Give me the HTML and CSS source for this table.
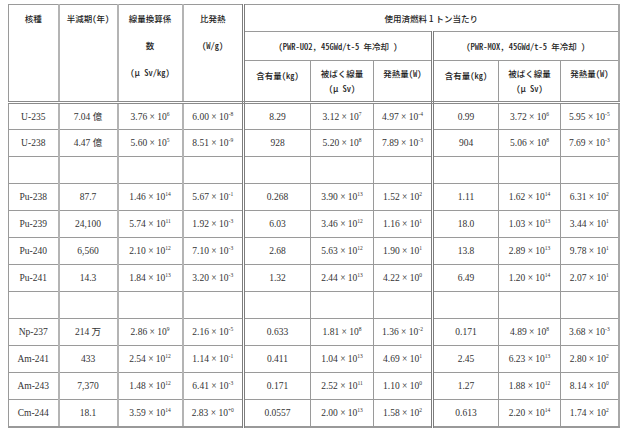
FILE: index.html
```html
<!DOCTYPE html>
<html lang="ja">
<head>
<meta charset="utf-8">
<link rel="stylesheet" href="styles.css">
</head>
<body>
<div class="wrap">
<table class="nuc">
  <colgroup>
    <col class="c1"><col class="c2"><col class="c3"><col class="c4">
    <col class="c5"><col class="c6"><col class="c7">
    <col class="c8"><col class="c9"><col class="c10">
  </colgroup>
  <thead>
    <tr class="h1">
      <th rowspan="3" class="tall lt">核種</th>
      <th rowspan="3" class="tall lt">半減期(年)</th>
      <th rowspan="3" class="tall lt">線量換算係<br>数<br>(μ Sv/kg)</th>
      <th rowspan="3" class="tall lt dbl">比発熱<br>(W/g)</th>
      <th colspan="6" class="mid rb fw">使用済燃料 1 トン当たり</th>
    </tr>
    <tr class="h2">
      <th colspan="3" class="mid dbl">(PWR-UO2, 45GWd/t-5 年冷却 )</th>
      <th colspan="3" class="mid rb">(PWR-MOX, 45GWd/t-5 年冷却 )</th>
    </tr>
    <tr class="h3">
      <th class="sub amt">含有量(kg)</th>
      <th class="sub">被ばく線量<br>(μ Sv)</th>
      <th class="sub dbl">発熱量(W)</th>
      <th class="sub amt">含有量(kg)</th>
      <th class="sub">被ばく線量<br>(μ Sv)</th>
      <th class="sub rb">発熱量(W)</th>
    </tr>
  </thead>
  <tbody>
    <tr class="first">
      <td class="lt">U-235</td><td class="lt">7.04 億</td><td class="lt">3.76 × 10<sup>6</sup></td><td class="lt dbl">6.00 × 10<sup>-8</sup></td>
      <td>8.29</td><td>3.12 × 10<sup>7</sup></td><td class="dbl">4.97 × 10<sup>-4</sup></td>
      <td>0.99</td><td>3.72 × 10<sup>6</sup></td><td class="rb">5.95 × 10<sup>-5</sup></td>
    </tr>
    <tr>
      <td class="lt">U-238</td><td class="lt">4.47 億</td><td class="lt">5.60 × 10<sup>5</sup></td><td class="lt dbl">8.51 × 10<sup>-9</sup></td>
      <td>928</td><td>5.20 × 10<sup>8</sup></td><td class="dbl">7.89 × 10<sup>-3</sup></td>
      <td>904</td><td>5.06 × 10<sup>8</sup></td><td class="rb">7.69 × 10<sup>-3</sup></td>
    </tr>
    <tr>
      <td class="lt"></td><td class="lt"></td><td class="lt"></td><td class="lt dbl"></td>
      <td></td><td></td><td class="dbl"></td>
      <td></td><td></td><td class="rb"></td>
    </tr>
    <tr>
      <td class="lt">Pu-238</td><td class="lt">87.7</td><td class="lt">1.46 × 10<sup>14</sup></td><td class="lt dbl">5.67 × 10<sup>-1</sup></td>
      <td>0.268</td><td>3.90 × 10<sup>13</sup></td><td class="dbl">1.52 × 10<sup>2</sup></td>
      <td>1.11</td><td>1.62 × 10<sup>14</sup></td><td class="rb">6.31 × 10<sup>2</sup></td>
    </tr>
    <tr>
      <td class="lt">Pu-239</td><td class="lt">24,100</td><td class="lt">5.74 × 10<sup>11</sup></td><td class="lt dbl">1.92 × 10<sup>-3</sup></td>
      <td>6.03</td><td>3.46 × 10<sup>12</sup></td><td class="dbl">1.16 × 10<sup>1</sup></td>
      <td>18.0</td><td>1.03 × 10<sup>13</sup></td><td class="rb">3.44 × 10<sup>1</sup></td>
    </tr>
    <tr>
      <td class="lt">Pu-240</td><td class="lt">6,560</td><td class="lt">2.10 × 10<sup>12</sup></td><td class="lt dbl">7.10 × 10<sup>-3</sup></td>
      <td>2.68</td><td>5.63 × 10<sup>12</sup></td><td class="dbl">1.90 × 10<sup>1</sup></td>
      <td>13.8</td><td>2.89 × 10<sup>13</sup></td><td class="rb">9.78 × 10<sup>1</sup></td>
    </tr>
    <tr>
      <td class="lt">Pu-241</td><td class="lt">14.3</td><td class="lt">1.84 × 10<sup>13</sup></td><td class="lt dbl">3.20 × 10<sup>-3</sup></td>
      <td>1.32</td><td>2.44 × 10<sup>13</sup></td><td class="dbl">4.22 × 10<sup>0</sup></td>
      <td>6.49</td><td>1.20 × 10<sup>14</sup></td><td class="rb">2.07 × 10<sup>1</sup></td>
    </tr>
    <tr>
      <td class="lt"></td><td class="lt"></td><td class="lt"></td><td class="lt dbl"></td>
      <td></td><td></td><td class="dbl"></td>
      <td></td><td></td><td class="rb"></td>
    </tr>
    <tr>
      <td class="lt">Np-237</td><td class="lt">214 万</td><td class="lt">2.86 × 10<sup>9</sup></td><td class="lt dbl">2.16 × 10<sup>-5</sup></td>
      <td>0.633</td><td>1.81 × 10<sup>8</sup></td><td class="dbl">1.36 × 10<sup>-2</sup></td>
      <td>0.171</td><td>4.89 × 10<sup>8</sup></td><td class="rb">3.68 × 10<sup>-3</sup></td>
    </tr>
    <tr>
      <td class="lt">Am-241</td><td class="lt">433</td><td class="lt">2.54 × 10<sup>12</sup></td><td class="lt dbl">1.14 × 10<sup>-1</sup></td>
      <td>0.411</td><td>1.04 × 10<sup>13</sup></td><td class="dbl">4.69 × 10<sup>1</sup></td>
      <td>2.45</td><td>6.23 × 10<sup>13</sup></td><td class="rb">2.80 × 10<sup>2</sup></td>
    </tr>
    <tr>
      <td class="lt">Am-243</td><td class="lt">7,370</td><td class="lt">1.48 × 10<sup>12</sup></td><td class="lt dbl">6.41 × 10<sup>-3</sup></td>
      <td>0.171</td><td>2.52 × 10<sup>11</sup></td><td class="dbl">1.10 × 10<sup>0</sup></td>
      <td>1.27</td><td>1.88 × 10<sup>12</sup></td><td class="rb">8.14 × 10<sup>0</sup></td>
    </tr>
    <tr class="last">
      <td class="lt">Cm-244</td><td class="lt">18.1</td><td class="lt">3.59 × 10<sup>14</sup></td><td class="lt dbl">2.83 × 10<sup>+0</sup></td>
      <td>0.0557</td><td>2.00 × 10<sup>13</sup></td><td class="dbl">1.58 × 10<sup>2</sup></td>
      <td>0.613</td><td>2.20 × 10<sup>14</sup></td><td class="rb">1.74 × 10<sup>2</sup></td>
    </tr>
  </tbody>
</table>
</div>
</body>
</html>
```
FILE: styles.css
```css
html, body {
  margin: 0;
  padding: 0;
  background: #ffffff;
}

.wrap {
  padding: 4px 0 0 8px;
}

.nuc {
  border-collapse: collapse;
  table-layout: fixed;
  width: 611px;
  color: #333333;
}

.c1 { width: 50px; }
.c2 { width: 59px; }
.c3 { width: 65px; }
.c4 { width: 61px; }
.c5 { width: 67px; }
.c6 { width: 63px; }
.c7 { width: 59px; }
.c8 { width: 66px; }
.c9 { width: 62px; }
.c10 { width: 58px; }

.nuc th,
.nuc td {
  border: 1px solid #9a9a9a;
  padding: 0;
  text-align: center;
}

.nuc th {
  font-family: "Noto Sans CJK JP", sans-serif;
  font-feature-settings: "hwid";
  font-size: 8.5px;
  font-weight: 500;
  color: #1e1e1e;
}

.nuc th.fw {
  font-feature-settings: normal;
}

.h1 { height: 27px; }
.h2 { height: 29px; }
.h3 { height: 42px; }

.tall {
  vertical-align: top;
  line-height: 27px;
}

.mid {
  vertical-align: middle;
  line-height: 14px;
}

.sub {
  vertical-align: top;
  line-height: 15px;
  padding-top: 5px !important;
}

.sub.amt {
  padding-top: 7px !important;
}

.nuc td {
  font-family: "Liberation Serif", "Noto Sans CJK JP", serif;
  font-size: 9.5px;
  height: 26px;
  vertical-align: middle;
  line-height: 12px;
}

.nuc td sup {
  font-size: 5.5px;
  vertical-align: 4px;
  line-height: 0;
}

.nuc .lt {
  border-right: 2px solid #b4b4b4;
}

.nuc .dbl {
  border-right: 3px double #7d7d7d;
}

.nuc .rb {
  border-right: 2px solid #a8a8a8;
}

.h3 th {
  border-bottom: 3px double #8a8a8a;
}

.nuc thead .tall {
  border-bottom: 3px double #8a8a8a;
}

.first td {
  height: 25px;
}

.last td {
  border-bottom: 2px solid #999999;
}
```
